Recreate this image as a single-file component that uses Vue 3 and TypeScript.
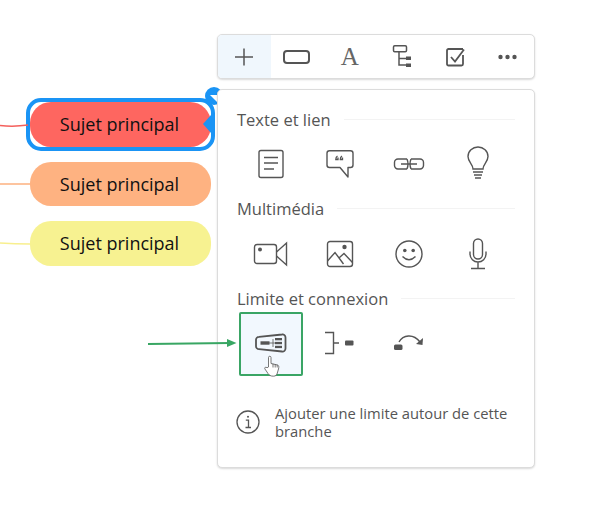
<template>
  <div class="canvas">
    <svg class="wires" width="240" height="360" viewBox="0 0 240 360" fill="none">
      <path d="M0 125.500 Q14 127 28 125" stroke="#f4605c" stroke-width="1.500" />
      <path d="M0 184 H30" stroke="#fdb07f" stroke-width="1.500" />
      <path d="M0 243 Q15 244 30 244" stroke="#f8ef8e" stroke-width="1.500" />
      <path d="M148 344 L230 343" stroke="#38a663" stroke-width="1.800" />
      <path d="M227 339 L236.500 343 L227 347 Z" fill="#38a663" />
    </svg>

    <div class="mindmap">
      <div
        v-for="topic in topics"
        :key="topic.color"
        class="topic"
        :style="{ background: topic.color }"
      >
        Sujet principal
        <template v-if="topic.selected">
          <span class="topic-ring"></span>
          <span class="topic-notch"></span>
          <svg class="topic-handle" width="24" height="24" viewBox="0 0 24 24">
            <circle cx="12" cy="11" r="9" fill="#1a94f5" />
            <path d="M8 10 H15 V17 Z" fill="#fff" />
          </svg>
        </template>
      </div>
    </div>

    <div class="side">
      <div class="toolbar">
        <button class="tool is-active">
          <svg width="24" height="24" viewBox="0 0 24 24" fill="none" stroke="#555" stroke-width="1.500">
            <path d="M12 3.500 V20.500 M3 12 H21" />
          </svg>
        </button>
        <button class="tool">
          <svg width="30" height="18" viewBox="0 0 30 18" fill="none" stroke="#555" stroke-width="2">
            <rect x="2" y="3" width="25" height="12" rx="3" />
          </svg>
        </button>
        <button class="tool tool-text">A</button>
        <button class="tool">
          <svg width="24" height="26" viewBox="0 0 24 26" fill="none" stroke="#555" stroke-width="1.500">
            <rect x="3.500" y="1.800" width="13" height="6" rx="1.200" />
            <path d="M9 8 V21 H16 M9 14.500 H16" />
            <rect x="16" y="12.500" width="5" height="3.500" fill="#555" stroke="none" />
            <rect x="16" y="19.500" width="5" height="3.500" fill="#555" stroke="none" />
          </svg>
        </button>
        <button class="tool">
          <svg width="24" height="24" viewBox="0 0 24 24" fill="none" stroke="#555" stroke-width="1.800">
            <path d="M20 10 V19 A1.500 1.500 0 0 1 18.500 20.500 H5.500 A1.500 1.500 0 0 1 4 19 V5.500 A1.500 1.500 0 0 1 5.500 4 H20" />
            <path d="M8 12 L12 16.500 L21 4.500" />
          </svg>
        </button>
        <button class="tool">
          <svg width="24" height="10" viewBox="0 0 24 10" fill="#555">
            <circle cx="4.500" cy="5" r="2.200" />
            <circle cx="11.500" cy="5" r="2.200" />
            <circle cx="18.500" cy="5" r="2.200" />
          </svg>
        </button>
      </div>

      <div class="panel">
        <section class="group">
          <h3 class="group-title"><span>Texte et lien</span></h3>
          <div class="grid">
            <div class="cell">
              <svg width="30" height="32" viewBox="0 0 30 32" fill="none" stroke="#555" stroke-width="1.400">
                <rect x="3" y="2.500" width="24" height="27" rx="2" />
                <path d="M8 9.500 H22 M8 15 H22 M8 21 H18" />
              </svg>
            </div>
            <div class="cell">
              <svg width="30" height="30" viewBox="0 0 30 30" fill="none" stroke="#555" stroke-width="1.400">
                <path d="M4.500 1.700 H25.500 A2.500 2.500 0 0 1 28 4.200 V16 A2.500 2.500 0 0 1 25.500 18.500 H23 V28 L15 18.500 H4.500 A2.500 2.500 0 0 1 2 16 V4.200 A2.500 2.500 0 0 1 4.500 1.700 Z" stroke-linejoin="round" />
                <path d="M12.500 7 Q10.800 8 10.800 10.500 H13 V8.500 M17 7 Q15.300 8 15.300 10.500 H17.500 V8.500" stroke-width="1.300" />
              </svg>
            </div>
            <div class="cell">
              <svg width="32" height="14" viewBox="0 0 32 14" fill="none" stroke="#555" stroke-width="1.400">
                <path d="M14 2 H5 A3.500 3.500 0 0 0 1.500 5.500 V8.500 A3.500 3.500 0 0 0 5 12 H14 M18 2 H27 A3.500 3.500 0 0 1 30.500 5.500 V8.500 A3.500 3.500 0 0 1 27 12 H18" />
                <path d="M14 2 Q16 7 14 12 M18 2 Q16 7 18 12 M8 7 H24" />
              </svg>
            </div>
            <div class="cell">
              <svg width="24" height="36" viewBox="0 0 24 36" fill="none" stroke="#555" stroke-width="1.400">
                <path d="M7 23 C7 18 2 16 2 10.500 A10 9.500 0 0 1 22 10.500 C22 16 17 18 17 23 H7 Z" />
                <path d="M7 26 H17 M8 29 H16 M9 32 H15" />
              </svg>
            </div>
          </div>
        </section>

        <section class="group">
          <h3 class="group-title"><span>Multimédia</span></h3>
          <div class="grid">
            <div class="cell">
              <svg width="36" height="26" viewBox="0 0 36 26" fill="none" stroke="#555" stroke-width="1.400">
                <rect x="1.500" y="3.500" width="22" height="19" rx="2.500" />
                <path d="M23.500 11 L33.500 2 V24 L23.500 15" />
                <circle cx="7" cy="8.500" r="2" fill="#555" stroke="none" />
              </svg>
            </div>
            <div class="cell">
              <svg width="28" height="28" viewBox="0 0 28 28" fill="none" stroke="#555" stroke-width="1.400">
                <rect x="1.500" y="1.500" width="25" height="25" rx="2.500" />
                <path d="M1.500 21 L9 12.500 L17.500 24 M13.500 17.500 L18 13.500 L26.500 22.500" />
                <circle cx="18.500" cy="7" r="2.200" fill="#555" stroke="none" />
              </svg>
            </div>
            <div class="cell">
              <svg width="28" height="28" viewBox="0 0 28 28" fill="none" stroke="#555" stroke-width="1.400">
                <circle cx="14" cy="14" r="13" />
                <circle cx="9.800" cy="10.500" r="1.800" fill="#555" stroke="none" />
                <circle cx="18.200" cy="10.500" r="1.800" fill="#555" stroke="none" />
                <path d="M7.500 16.500 Q14 23 20.500 16.500" stroke-width="1.500" />
              </svg>
            </div>
            <div class="cell">
              <svg width="20" height="32" viewBox="0 0 20 32" fill="none" stroke="#555" stroke-width="1.400">
                <rect x="5.500" y="1" width="9" height="20" rx="4.500" />
                <path d="M2 13.500 V16 A8 8 0 0 0 18 16 V13.500 M10 24 V30 M3 30.500 H17" />
              </svg>
            </div>
          </div>
        </section>

        <section class="group">
          <h3 class="group-title"><span>Limite et connexion</span></h3>
          <div class="grid">
            <div class="cell is-hover">
              <svg width="32" height="20" viewBox="0 0 32 20" fill="none" stroke="#555" stroke-width="1.800">
                <path d="M4 3.800 L27 1.500 A3 3 0 0 1 30.500 4.500 V15.500 A3 3 0 0 1 27 18.500 L4 16.200 A3 3 0 0 1 1 13 V7 A3 3 0 0 1 4 3.800 Z" />
                <rect x="5.500" y="8.300" width="9" height="3.400" fill="#555" stroke="none" />
                <rect x="20" y="5" width="7" height="2.300" fill="#555" stroke="none" />
                <rect x="20" y="8.900" width="7" height="2.300" fill="#555" stroke="none" />
                <rect x="20" y="12.800" width="7" height="2.300" fill="#555" stroke="none" />
                <path d="M14 10 H20 M18 6 V14" stroke-width="0.800" />
              </svg>
              <svg class="hand" width="16" height="22" viewBox="0 0 16 22" fill="#fff" stroke="#555" stroke-width="0.800">
                <path d="M4.500 12 V2.500 A1.200 1.200 0 0 1 7 2.500 V8.500 L13.500 10 C15 10.500 15 12 14.500 14 L13 19 C12.500 21 10 21.500 7.500 21 C5.500 20.500 4.500 19.500 3 17 L0.800 13.800 C0.300 12.500 1.800 11.500 3 12.800 Z" />
                <path d="M9 8.800 V12.500 M11.200 9.300 V12.500 M13.200 9.800 V12.500" />
              </svg>
            </div>
            <div class="cell">
              <svg width="32" height="24" viewBox="0 0 32 24" fill="none" stroke="#555" stroke-width="1.400">
                <path d="M1 1.500 H9.500 V22.500 H1 M9.500 12 H15" />
                <rect x="21" y="9.500" width="8.500" height="5" rx="1" fill="#555" stroke="none" />
              </svg>
            </div>
            <div class="cell">
              <svg width="32" height="18" viewBox="0 0 32 18" fill="none" stroke="#555" stroke-width="1.400">
                <path d="M6 8 C10 1 20 -1 27 8" />
                <rect x="1" y="10.500" width="8.500" height="5.500" rx="1.500" fill="#555" stroke="none" />
                <path d="M23 10 L29.500 11 L30 4 Z" fill="#555" stroke="none" />
              </svg>
            </div>
          </div>
        </section>

        <div class="hint">
          <svg class="hint-icon" width="24" height="24" viewBox="0 0 24 24" fill="none" stroke="#555" stroke-width="1.300">
            <circle cx="12" cy="12" r="11" />
            <path d="M9.800 10.200 H12.500 V17.500 M9.500 17.500 H15" />
            <circle cx="12" cy="6.800" r="1" fill="#555" stroke="none" />
          </svg>
          <p class="hint-text">Ajouter une limite autour de cette branche</p>
        </div>
      </div>
    </div>
  </div>
</template>

<script setup lang="ts">
interface Topic {
  color: string
  selected: boolean
}

const topics: Topic[] = [
  { color: '#fe6660', selected: true },
  { color: '#feb281', selected: false },
  { color: '#f7f291', selected: false }
]
</script>

<style scoped>
.canvas {
  position: relative;
  display: flex;
  width: 600px;
  height: 506px;
  overflow: hidden;
  background: #fff;
  font-family: "Open Sans", "Liberation Sans", sans-serif;
}

.wires {
  position: absolute;
  top: 0;
  left: 0;
  z-index: 2;
}

.mindmap {
  display: flex;
  flex-direction: column;
  gap: 15px;
  width: 181px;
  margin: 102px 6px 0 30px;
}

.topic {
  position: relative;
  display: flex;
  align-items: center;
  justify-content: center;
  height: 44.500px;
  padding-right: 2px;
  box-sizing: border-box;
  border-radius: 21px;
  font-size: 18px;
  color: #111;
}

.topic-ring {
  position: absolute;
  inset: -4px;
  border: 4px solid #1a94f5;
  border-radius: 15px;
}

.topic-notch {
  position: absolute;
  top: 13px;
  right: 0;
  width: 8px;
  height: 18px;
  background: #1a94f5;
  clip-path: polygon(0 50%, 100% 0, 100% 100%);
}

.topic-handle {
  position: absolute;
  top: -17px;
  right: -15px;
}

.side {
  position: relative;
  display: flex;
  flex-direction: column;
  gap: 10px;
  width: 318px;
  padding-top: 34px;
}

.toolbar {
  display: flex;
  box-sizing: border-box;
  height: 45px;
  overflow: hidden;
  background: #fff;
  border: 1px solid #dcdcdc;
  border-radius: 5px;
  box-shadow: 0 1px 2px rgba(0, 0, 0, 0.15);
}

.tool {
  display: flex;
  flex: 1;
  align-items: center;
  justify-content: center;
  padding: 0;
  background: none;
  border: none;
}

.tool.is-active {
  background: #f0f7fd;
}

.tool-text {
  font-family: "Liberation Serif", serif;
  font-size: 25px;
  color: #666;
}

.panel {
  display: flex;
  flex-direction: column;
  box-sizing: border-box;
  height: 379px;
  padding: 19px 19px 0;
  background: #fff;
  border: 1px solid #dcdcdc;
  border-radius: 5px;
  box-shadow: 0 1px 2px rgba(0, 0, 0, 0.15);
}

.group {
  height: 89.500px;
}

.group-title {
  display: flex;
  align-items: center;
  gap: 13px;
  height: 20px;
  margin: 0;
  font-size: 16.500px;
  font-weight: 400;
  color: #555;
}

.group-title::after {
  flex: 1;
  height: 1px;
  background: #f3f3f3;
  content: "";
}

.grid {
  display: grid;
  grid-template-columns: repeat(4, 69px);
  margin-left: -1px;
}

.cell {
  position: relative;
  display: flex;
  align-items: center;
  justify-content: center;
  box-sizing: border-box;
  height: 64px;
  margin: 4px 2.500px 0;
  padding-bottom: 2px;
}

.cell.is-hover {
  background: #f2f8fe;
  outline: 2px solid #3aa565;
  outline-offset: -2px;
  border-radius: 2px;
}

.hand {
  position: absolute;
  top: 43px;
  left: 25px;
}

.hint {
  display: flex;
  align-items: center;
  gap: 15px;
  margin-top: 26px;
  margin-left: -1px;
}

.hint-icon {
  flex-shrink: 0;
}

.hint-text {
  margin: 0;
  font-size: 14.750px;
  line-height: 18px;
  color: #555;
}
</style>
